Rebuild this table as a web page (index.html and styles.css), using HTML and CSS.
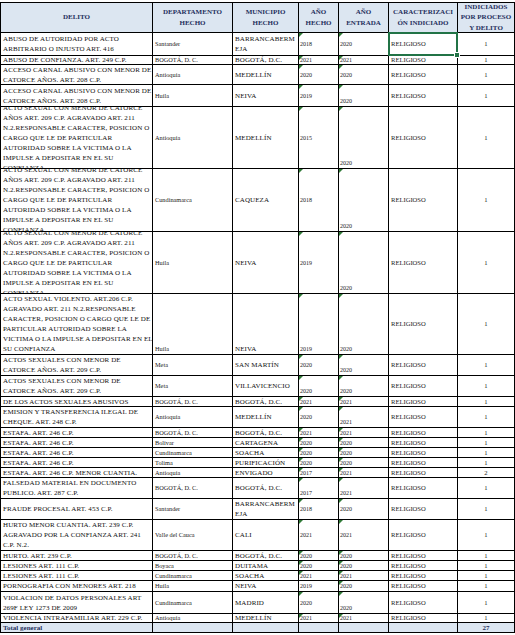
FILE: index.html
```html
<!DOCTYPE html>
<html lang="es">
<head>
<meta charset="utf-8">
<title>Delitos</title>
<link rel="stylesheet" href="styles.css">
</head>
<body>
<div class="sheet">
  <div class="c h"><span>DELITO</span></div>
  <div class="c h"><span>DEPARTAMENTO<br>HECHO</span></div>
  <div class="c h"><span>MUNICIPIO<br>HECHO</span></div>
  <div class="c h"><span>AÑO<br>HECHO</span></div>
  <div class="c h"><span>AÑO<br>ENTRADA</span></div>
  <div class="c h"><span>CARACTERIZACI<br>ÓN INDICIADO</span></div>
  <div class="c h"><span>INDICIADOS<br>POR PROCESO<br>Y DELITO</span></div>

  <!-- 1 -->
  <div class="c x"><span>ABUSO DE AUTORIDAD POR ACTO<br>ARBITRARIO O INJUSTO ART. 416</span></div>
  <div class="c d"><span>Santander</span></div>
  <div class="c u"><span>BARRANCABERM<br>EJA</span></div>
  <div class="c t"><span>2018</span></div>
  <div class="c t"><span>2020</span></div>
  <div class="c r active"><span>RELIGIOSO</span><i class="sel"></i></div>
  <div class="c m"><span>1</span></div>
  <!-- 2 -->
  <div class="c x"><span>ABUSO DE CONFIANZA. ART. 249 C.P.</span></div>
  <div class="c d"><span>BOGOTÁ, D. C.</span></div>
  <div class="c u"><span>BOGOTÁ, D.C.</span></div>
  <div class="c t"><span>2021</span></div>
  <div class="c t"><span>2021</span></div>
  <div class="c r"><span>RELIGIOSO</span></div>
  <div class="c m"><span>1</span></div>
  <!-- 3 -->
  <div class="c x"><span>ACCESO CARNAL ABUSIVO CON MENOR DE<br>CATORCE AÑOS. ART. 208 C.P.</span></div>
  <div class="c d"><span>Antioquia</span></div>
  <div class="c u"><span>MEDELLÍN</span></div>
  <div class="c t"><span>2020</span></div>
  <div class="c t"><span>2020</span></div>
  <div class="c r"><span>RELIGIOSO</span></div>
  <div class="c m"><span>1</span></div>
  <!-- 4 -->
  <div class="c x"><span>ACCESO CARNAL ABUSIVO CON MENOR DE<br>CATORCE AÑOS. ART. 208 C.P.</span></div>
  <div class="c d"><span>Huila</span></div>
  <div class="c u"><span>NEIVA</span></div>
  <div class="c t"><span>2019</span></div>
  <div class="c t b"><span>2020</span></div>
  <div class="c r"><span>RELIGIOSO</span></div>
  <div class="c m"><span>1</span></div>
  <!-- 5 -->
  <div class="c x"><span>ACTO SEXUAL CON MENOR DE CATORCE<br>AÑOS ART. 209 C.P. AGRAVADO ART. 211<br>N.2.RESPONSABLE CARACTER, POSICION O<br>CARGO QUE LE DE PARTICULAR<br>AUTORIDAD SOBRE LA VICTIMA O LA<br>IMPULSE A DEPOSITAR EN EL SU<br>CONFIANZA</span></div>
  <div class="c d"><span>Antioquia</span></div>
  <div class="c u"><span>MEDELLÍN</span></div>
  <div class="c t"><span>2015</span></div>
  <div class="c t b"><span>2020</span></div>
  <div class="c r"><span>RELIGIOSO</span></div>
  <div class="c m"><span>1</span></div>
  <!-- 6 -->
  <div class="c x"><span>ACTO SEXUAL CON MENOR DE CATORCE<br>AÑOS ART. 209 C.P. AGRAVADO ART. 211<br>N.2.RESPONSABLE CARACTER, POSICION O<br>CARGO QUE LE DE PARTICULAR<br>AUTORIDAD SOBRE LA VICTIMA O LA<br>IMPULSE A DEPOSITAR EN EL SU<br>CONFIANZA</span></div>
  <div class="c d"><span>Cundinamarca</span></div>
  <div class="c u"><span>CAQUEZA</span></div>
  <div class="c t"><span>2018</span></div>
  <div class="c t b"><span>2020</span></div>
  <div class="c r"><span>RELIGIOSO</span></div>
  <div class="c m"><span>1</span></div>
  <!-- 7 -->
  <div class="c x"><span>ACTO SEXUAL CON MENOR DE CATORCE<br>AÑOS ART. 209 C.P. AGRAVADO ART. 211<br>N.2.RESPONSABLE CARACTER, POSICION O<br>CARGO QUE LE DE PARTICULAR<br>AUTORIDAD SOBRE LA VICTIMA O LA<br>IMPULSE A DEPOSITAR EN EL SU<br>CONFIANZA</span></div>
  <div class="c d"><span>Huila</span></div>
  <div class="c u"><span>NEIVA</span></div>
  <div class="c t"><span>2019</span></div>
  <div class="c t b"><span>2020</span></div>
  <div class="c r"><span>RELIGIOSO</span></div>
  <div class="c m"><span>1</span></div>
  <!-- 8 -->
  <div class="c x"><span>ACTO SEXUAL VIOLENTO. ART.206 C.P.<br>AGRAVADO ART. 211 N.2.RESPONSABLE<br>CARACTER, POSICION O CARGO QUE LE DE<br>PARTICULAR AUTORIDAD SOBRE LA<br>VICTIMA O LA IMPULSE A DEPOSITAR EN EL<br>SU CONFIANZA</span></div>
  <div class="c d b"><span>Huila</span></div>
  <div class="c u b"><span>NEIVA</span></div>
  <div class="c t b"><span>2019</span></div>
  <div class="c t b"><span>2020</span></div>
  <div class="c r"><span>RELIGIOSO</span></div>
  <div class="c m"><span>1</span></div>
  <!-- 9 -->
  <div class="c x"><span>ACTOS SEXUALES CON MENOR DE<br>CATORCE AÑOS. ART. 209 C.P.</span></div>
  <div class="c d"><span>Meta</span></div>
  <div class="c u"><span>SAN MARTÍN</span></div>
  <div class="c t"><span>2020</span></div>
  <div class="c t b"><span>2020</span></div>
  <div class="c r"><span>RELIGIOSO</span></div>
  <div class="c m"><span>1</span></div>
  <!-- 10 -->
  <div class="c x"><span>ACTOS SEXUALES CON MENOR DE<br>CATORCE AÑOS. ART. 209 C.P.</span></div>
  <div class="c d"><span>Meta</span></div>
  <div class="c u"><span>VILLAVICENCIO</span></div>
  <div class="c t b"><span>2020</span></div>
  <div class="c t b"><span>2020</span></div>
  <div class="c r"><span>RELIGIOSO</span></div>
  <div class="c m"><span>1</span></div>
  <!-- 11 -->
  <div class="c x"><span>DE LOS ACTOS SEXUALES ABUSIVOS</span></div>
  <div class="c d"><span>BOGOTÁ, D. C.</span></div>
  <div class="c u"><span>BOGOTÁ, D.C.</span></div>
  <div class="c t"><span>2021</span></div>
  <div class="c t"><span>2021</span></div>
  <div class="c r"><span>RELIGIOSO</span></div>
  <div class="c m"><span>1</span></div>
  <!-- 12 -->
  <div class="c x"><span>EMISION Y TRANSFERENCIA ILEGAL DE<br>CHEQUE. ART. 248 C.P.</span></div>
  <div class="c d"><span>Antioquia</span></div>
  <div class="c u"><span>MEDELLÍN</span></div>
  <div class="c t"><span>2020</span></div>
  <div class="c t b"><span>2021</span></div>
  <div class="c r"><span>RELIGIOSO</span></div>
  <div class="c m"><span>1</span></div>
  <!-- 13 -->
  <div class="c x"><span>ESTAFA. ART. 246 C.P.</span></div>
  <div class="c d"><span>BOGOTÁ, D. C.</span></div>
  <div class="c u"><span>BOGOTÁ, D.C.</span></div>
  <div class="c t"><span>2021</span></div>
  <div class="c t"><span>2021</span></div>
  <div class="c r"><span>RELIGIOSO</span></div>
  <div class="c m"><span>1</span></div>
  <!-- 14 -->
  <div class="c x"><span>ESTAFA. ART. 246 C.P.</span></div>
  <div class="c d"><span>Bolívar</span></div>
  <div class="c u"><span>CARTAGENA</span></div>
  <div class="c t"><span>2020</span></div>
  <div class="c t"><span>2020</span></div>
  <div class="c r"><span>RELIGIOSO</span></div>
  <div class="c m"><span>1</span></div>
  <!-- 15 -->
  <div class="c x"><span>ESTAFA. ART. 246 C.P.</span></div>
  <div class="c d"><span>Cundinamarca</span></div>
  <div class="c u"><span>SOACHA</span></div>
  <div class="c t"><span>2020</span></div>
  <div class="c t"><span>2020</span></div>
  <div class="c r"><span>RELIGIOSO</span></div>
  <div class="c m"><span>1</span></div>
  <!-- 16 -->
  <div class="c x"><span>ESTAFA. ART. 246 C.P.</span></div>
  <div class="c d"><span>Tolima</span></div>
  <div class="c u"><span>PURIFICACIÓN</span></div>
  <div class="c t"><span>2020</span></div>
  <div class="c t"><span>2020</span></div>
  <div class="c r"><span>RELIGIOSO</span></div>
  <div class="c m"><span>1</span></div>
  <!-- 17 -->
  <div class="c x"><span>ESTAFA. ART. 246 C.P. MENOR CUANTIA.</span></div>
  <div class="c d"><span>Antioquia</span></div>
  <div class="c u"><span>ENVIGADO</span></div>
  <div class="c t"><span>2017</span></div>
  <div class="c t"><span>2021</span></div>
  <div class="c r"><span>RELIGIOSO</span></div>
  <div class="c m"><span>2</span></div>
  <!-- 18 -->
  <div class="c x"><span>FALSEDAD MATERIAL EN DOCUMENTO<br>PUBLICO. ART. 287 C.P.</span></div>
  <div class="c d"><span>BOGOTÁ, D. C.</span></div>
  <div class="c u"><span>BOGOTÁ, D.C.</span></div>
  <div class="c t b"><span>2017</span></div>
  <div class="c t b"><span>2021</span></div>
  <div class="c r"><span>RELIGIOSO</span></div>
  <div class="c m"><span>1</span></div>
  <!-- 19 -->
  <div class="c x"><span>FRAUDE PROCESAL ART. 453 C.P.</span></div>
  <div class="c d"><span>Santander</span></div>
  <div class="c u"><span>BARRANCABERM<br>EJA</span></div>
  <div class="c t"><span>2018</span></div>
  <div class="c t"><span>2020</span></div>
  <div class="c r"><span>RELIGIOSO</span></div>
  <div class="c m"><span>1</span></div>
  <!-- 20 -->
  <div class="c x"><span>HURTO MENOR CUANTIA. ART. 239 C.P.<br>AGRAVADO POR LA CONFIANZA ART. 241<br>C.P. N.2.</span></div>
  <div class="c d"><span>Valle del Cauca</span></div>
  <div class="c u"><span>CALI</span></div>
  <div class="c t"><span>2021</span></div>
  <div class="c t"><span>2021</span></div>
  <div class="c r"><span>RELIGIOSO</span></div>
  <div class="c m"><span>1</span></div>
  <!-- 21 -->
  <div class="c x"><span>HURTO. ART. 239 C.P.</span></div>
  <div class="c d"><span>BOGOTÁ, D. C.</span></div>
  <div class="c u"><span>BOGOTÁ, D.C.</span></div>
  <div class="c t"><span>2020</span></div>
  <div class="c t"><span>2020</span></div>
  <div class="c r"><span>RELIGIOSO</span></div>
  <div class="c m"><span>1</span></div>
  <!-- 22 -->
  <div class="c x"><span>LESIONES ART. 111 C.P.</span></div>
  <div class="c d"><span>Boyaca</span></div>
  <div class="c u"><span>DUITAMA</span></div>
  <div class="c t"><span>2020</span></div>
  <div class="c t"><span>2020</span></div>
  <div class="c r"><span>RELIGIOSO</span></div>
  <div class="c m"><span>1</span></div>
  <!-- 23 -->
  <div class="c x"><span>LESIONES ART. 111 C.P.</span></div>
  <div class="c d"><span>Cundinamarca</span></div>
  <div class="c u"><span>SOACHA</span></div>
  <div class="c t"><span>2021</span></div>
  <div class="c t"><span>2021</span></div>
  <div class="c r"><span>RELIGIOSO</span></div>
  <div class="c m"><span>1</span></div>
  <!-- 24 -->
  <div class="c x"><span>PORNOGRAFIA CON MENORES ART. 218</span></div>
  <div class="c d"><span>Huila</span></div>
  <div class="c u"><span>NEIVA</span></div>
  <div class="c y"><span>2019</span></div>
  <div class="c t"><span>2020</span></div>
  <div class="c r"><span>RELIGIOSO</span></div>
  <div class="c m"><span>1</span></div>
  <!-- 25 -->
  <div class="c x"><span>VIOLACION DE DATOS PERSONALES ART<br>269F LEY 1273 DE 2009</span></div>
  <div class="c d"><span>Cundinamarca</span></div>
  <div class="c u"><span>MADRID</span></div>
  <div class="c t"><span>2020</span></div>
  <div class="c t b"><span>2020</span></div>
  <div class="c r"><span>RELIGIOSO</span></div>
  <div class="c m"><span>1</span></div>
  <!-- 26 -->
  <div class="c x"><span>VIOLENCIA INTRAFAMILIAR ART. 229 C.P.</span></div>
  <div class="c d"><span>Antioquia</span></div>
  <div class="c u"><span>MEDELLÍN</span></div>
  <div class="c t"><span>2021</span></div>
  <div class="c t"><span>2021</span></div>
  <div class="c r"><span>RELIGIOSO</span></div>
  <div class="c m"><span>1</span></div>
  <!-- total -->
  <div class="c tot"><span>Total general</span></div>
  <div class="c tot"></div>
  <div class="c tot"></div>
  <div class="c tot"></div>
  <div class="c tot"></div>
  <div class="c tot"></div>
  <div class="c tot m"><span>27</span></div>
</div>
</body>
</html>
```

FILE: styles.css
```css
html, body {
  margin: 0;
  padding: 0;
  background: #ffffff;
}

body {
  padding-top: 2px;
  font-family: "Liberation Serif", "Times New Roman", serif;
  font-size: 7px;
  line-height: 10px;
  color: #000000;
}

.sheet {
  display: grid;
  grid-template-columns: 151px 79px 65px 39px 49px 68px 56px;
  grid-template-rows: 29px 22px 8px 19px 21px 61px 62px 61px 60px 20px 20px 9px 20px 9px 9px 9px 9px 9px 20px 20px 30px 9px 9px 9px 10px 21px 8px 9px;
  gap: 1px;
  padding: 1px;
  background: #000000;
  width: 515px;
  box-sizing: border-box;
}

.c {
  background: #ffffff;
  display: flex;
  align-items: center;
  padding: 0 2px;
  overflow: hidden;
  white-space: nowrap;
  position: relative;
}

.c > span {
  display: block;
}

.x {
  font-size: 7px;
  letter-spacing: 0.1px;
  padding-left: 2px;
  color: #111111;
}

.d {
  font-size: 6.3px;
  color: #1a1a1a;
}

.u {
  font-size: 7px;
  letter-spacing: 0.1px;
  color: #111111;
}

.t,
.y {
  font-size: 6px;
  padding-left: 1px;
  color: #1a1a1a;
}

.r {
  font-size: 6.6px;
  color: #1a1a1a;
}

.b {
  align-items: flex-end;
}

.m {
  justify-content: center;
  font-size: 6.6px;
  color: #1a1a1a;
}

.h {
  background: #dce6f1;
  color: #1f2f5c;
  font-weight: bold;
  justify-content: center;
  text-align: center;
  line-height: 10.4px;
  font-size: 7px;
}

.t::before {
  content: "";
  position: absolute;
  top: 0;
  left: 0;
  border-top: 4px solid #2f7a36;
  border-right: 4px solid transparent;
}

.tot {
  background: #dce6f1;
  color: #1f2f5c;
  font-weight: bold;
  font-size: 7px;
}

.active {
  overflow: visible;
  z-index: 2;
}

.sel {
  position: absolute;
  left: -1px;
  top: -1px;
  right: -1px;
  bottom: -1px;
  border: 2px solid #217346;
}

.sel::after {
  content: "";
  position: absolute;
  right: -4px;
  bottom: -4px;
  width: 4px;
  height: 4px;
  background: #217346;
  border: 1px solid #ffffff;
}
```
